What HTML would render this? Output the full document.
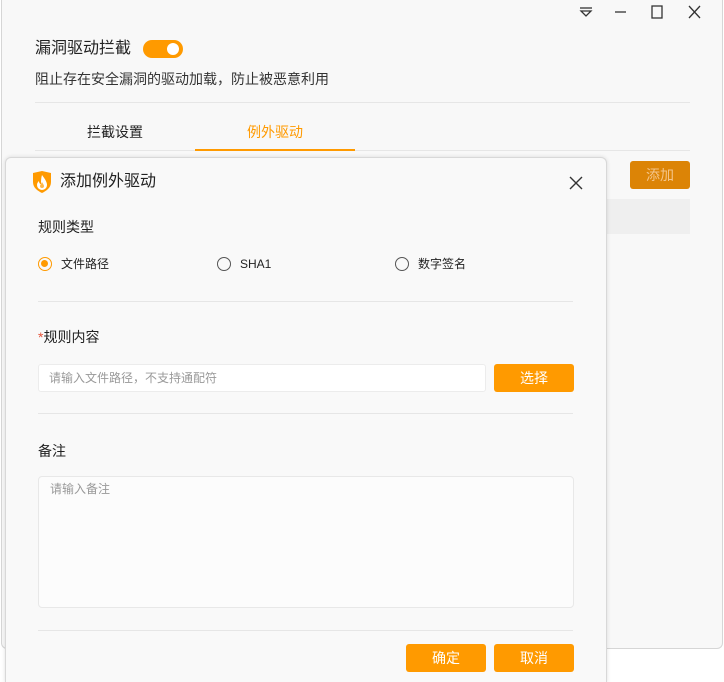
<!DOCTYPE html>
<html style="overflow:hidden;height:682px"><head><meta charset="utf-8"><style>
*{margin:0;padding:0;box-sizing:border-box}
body{width:724px;height:682px;background:#fff;position:relative;overflow:hidden;font-family:"Liberation Sans","Noto Sans CJK SC",sans-serif;color:#222}
.abs{position:absolute}
.t{line-height:1}
.win{left:1px;top:0;width:722px;height:649px;background:#f8f8f8;border:1px solid #d6d6d6;border-top:none;border-radius:0 0 6px 6px}
.dlg{left:5px;top:157px;width:602px;height:526px;background:#f9f9f9;border:1px solid #d8d8d8;border-bottom:none;border-radius:6px 6px 0 0;box-shadow:0 0 4px rgba(0,0,0,.12)}
.line{height:1px;background:#e6e6e6}
.btn{background:#ff9a00;color:#fff;border-radius:3px;font-size:14px;text-align:center}
.radio{width:14px;height:14px;border:1.5px solid #555;border-radius:50%}
</style></head><body>
<div class="abs win"></div>
<svg class="abs" style="left:576px;top:4px" width="140" height="16" viewBox="0 0 140 16">
<g stroke="#333" stroke-width="1.3" fill="none">
<path d="M4 4h12"/><path d="M5 7h10l-5 5z"/>
<path d="M39 8h11"/>
<rect x="76" y="2" width="10" height="12"/>
<path d="M113 2l11 12M124 2l-11 12"/>
</g></svg>
<div class="abs t" style="left:35px;top:41px;font-size:16px;color:#222">漏洞驱动拦截</div>
<div class="abs" style="left:143px;top:40px;width:40px;height:18px;border-radius:9px;background:#ff9a00"><div class="abs" style="right:4px;top:3px;width:12px;height:12px;border-radius:50%;background:#fff"></div></div>
<div class="abs t" style="left:35px;top:72px;font-size:14px;color:#333">阻止存在安全漏洞的驱动加载，防止被恶意利用</div>
<div class="abs line" style="left:35px;top:102px;width:655px"></div>
<div class="abs t" style="left:87px;top:125px;font-size:14px">拦截设置</div>
<div class="abs t" style="left:247px;top:125px;font-size:14px;color:#ff9a00">例外驱动</div>
<div class="abs line" style="left:35px;top:150px;width:655px"></div>
<div class="abs" style="left:195px;top:149px;width:160px;height:2px;background:#ff9a00"></div>
<div class="abs btn" style="left:630px;top:161px;width:60px;height:28px;line-height:28px;background:#dc8406;color:#f4c58a">添加</div>
<div class="abs" style="left:606px;top:199px;width:84px;height:35px;background:#efefef"></div>

<div class="abs dlg"></div>
<svg class="abs" style="left:32px;top:170px" width="20" height="24" viewBox="0 0 20 24">
<path d="M1 3l9-2 9 2v9c0 6-5 9-9 11C6 21 1 18 1 12z" fill="#ff9a00"/>
<path d="M10 5c3 4 5 7 5 10a5 5 0 0 1-10 0c0-2 1-3 2-4 0 2 1 3 2 3 0-3 0-6 1-9z" fill="#fff"/>
<path d="M10 12c1 2 2 3 2 4a2 2 0 0 1-4 0c0-1 1-2 2-4z" fill="#ffb84a"/>
</svg>
<div class="abs t" style="left:60px;top:174px;font-size:16px">添加例外驱动</div>
<svg class="abs" style="left:569px;top:176px" width="14" height="14"><path d="M1 1l12 12M13 1L1 13" stroke="#333" stroke-width="1.4"/></svg>
<div class="abs t" style="left:38px;top:220px;font-size:14px">规则类型</div>
<div class="abs radio" style="left:38px;top:257px;border-color:#ff9a00"><div class="abs" style="left:2px;top:2px;width:7px;height:7px;border-radius:50%;background:#ff9a00"></div></div>
<div class="abs t" style="left:61px;top:258px;font-size:12px">文件路径</div>
<div class="abs radio" style="left:217px;top:257px"></div>
<div class="abs t" style="left:240px;top:258px;font-size:12px">SHA1</div>
<div class="abs radio" style="left:395px;top:257px"></div>
<div class="abs t" style="left:418px;top:258px;font-size:12px">数字签名</div>
<div class="abs line" style="left:38px;top:301px;width:535px"></div>
<div class="abs t" style="left:38px;top:330px;font-size:14px"><span style="color:#e5533a">*</span>规则内容</div>
<div class="abs t" style="left:38px;top:364px;width:448px;height:28px;background:#fff;border:1px solid #ececec;border-radius:3px;font-size:12px;color:#999;padding:7px 10px">请输入文件路径，不支持通配符</div>
<div class="abs btn" style="left:494px;top:364px;width:80px;height:28px;line-height:28px">选择</div>
<div class="abs line" style="left:38px;top:413px;width:535px"></div>
<div class="abs t" style="left:38px;top:444px;font-size:14px">备注</div>
<div class="abs t" style="left:38px;top:476px;width:536px;height:132px;background:#fcfcfc;border:1px solid #e8e8e8;border-radius:4px;font-size:12px;color:#999;padding:6px 11px">请输入备注</div>
<div class="abs line" style="left:38px;top:630px;width:535px"></div>
<div class="abs btn" style="left:406px;top:644px;width:80px;height:28px;line-height:28px">确定</div>
<div class="abs btn" style="left:494px;top:644px;width:80px;height:28px;line-height:28px">取消</div>
</body></html>
